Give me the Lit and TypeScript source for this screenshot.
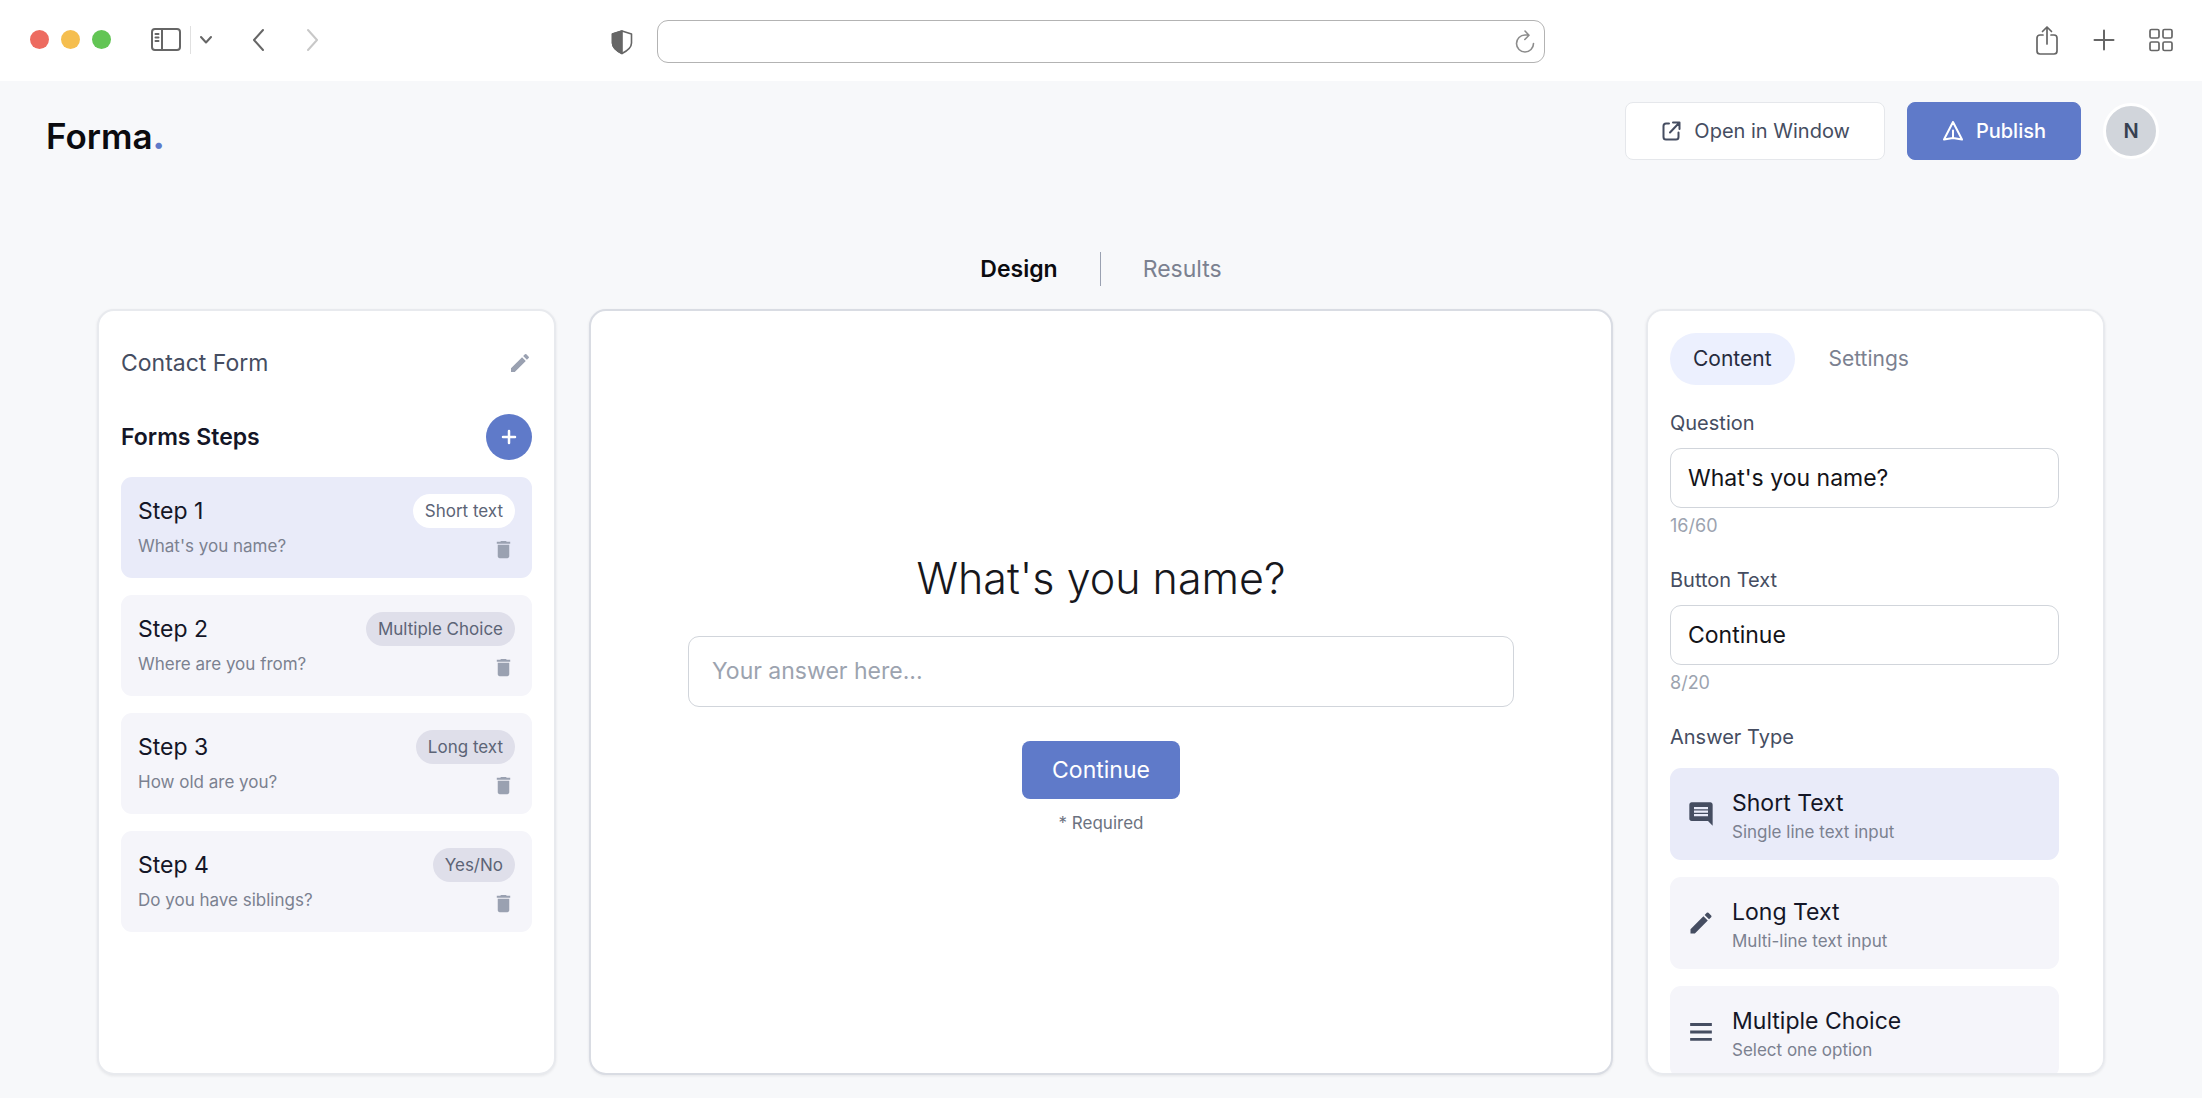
import { LitElement, html, css, svg, TemplateResult } from "lit";
import { customElement, property, state } from "lit/decorators.js";
import { classMap } from "lit/directives/class-map.js";

const controls = css`
  *,
  *::before,
  *::after {
    box-sizing: border-box;
  }
  button,
  input {
    font: inherit;
    color: inherit;
    margin: 0;
  }
  button {
    display: inline-flex;
    align-items: center;
    justify-content: center;
    padding: 0;
    border: 0;
    background: none;
    cursor: pointer;
  }
  svg {
    display: block;
    flex: none;
  }
  h1,
  h2,
  h3,
  p,
  ul {
    margin: 0;
    padding: 0;
    font-size: inherit;
    font-weight: inherit;
  }
  ul {
    list-style: none;
  }
`;

const stroked = (width: number, height: number, body: TemplateResult, weight = 2) => html`<svg
  width=${width}
  height=${height}
  viewBox="0 0 ${width} ${height}"
  fill="none"
  stroke="currentColor"
  stroke-width=${weight}
  stroke-linecap="round"
  stroke-linejoin="round"
  aria-hidden="true"
>
  ${body}
</svg>`;

const filled = (size: number, path: string) => html`<svg
  width=${size}
  height=${size}
  viewBox="0 0 24 24"
  fill="currentColor"
  aria-hidden="true"
>
  <path d=${path}></path>
</svg>`;

const PENCIL =
  "M3 17.25V21h3.75L17.81 9.94l-3.75-3.75L3 17.25zM20.71 7.04a1 1 0 0 0 0-1.41l-2.34-2.34a1 1 0 0 0-1.41 0l-1.83 1.83 3.75 3.75 1.83-1.83z";
const TRASH = "M6 19c0 1.100.9 2 2 2h8c1.100 0 2-.9 2-2V7H6v12zM19 4h-3.500l-1-1h-5l-1 1H5v2h14V4z";
const MESSAGE =
  "M21.990 4c0-1.100-.89-2-1.990-2H4c-1.100 0-2 .9-2 2v12c0 1.100.9 2 2 2h14l4 4-.01-18zM18 14H6v-2h12v2zm0-3H6V9h12v2zm0-3H6V6h12v2z";
const LINES = "M2.700 19.600h18.600v-2.500H2.700v2.500zm0-6.400h18.600v-2.500H2.700v2.500zM2.700 4.300v2.500h18.600V4.300H2.700z";

@customElement("browser-bar")
class BrowserBar extends LitElement {
  static styles = [
    controls,
    css`
      :host {
        display: grid;
        grid-template-columns: 1fr minmax(0, 888px) 1fr;
        align-items: center;
        height: 81px;
        background: #ffffff;
        color: #666666;
      }
      .left,
      .right,
      .lights,
      .sidebar,
      .history {
        display: flex;
        align-items: center;
      }
      .left {
        padding: 0 24px 2px 30px;
        gap: 40px;
      }
      .lights {
        gap: 12px;
      }
      .light {
        width: 19px;
        height: 19px;
        border-radius: 50%;
      }
      .close {
        background: #ed6b60;
      }
      .minimise {
        background: #f5be4f;
      }
      .maximise {
        background: #62c554;
      }
      .sidebar {
        gap: 9px;
      }
      .rule {
        width: 1px;
        height: 28px;
        background: #e0e0e0;
      }
      .history {
        gap: 43px;
      }
      .forward {
        color: #c8c8c8;
      }
      .shield {
        margin-left: auto;
        padding-top: 4px;
      }
      .address {
        display: flex;
        align-items: center;
        height: 43px;
        margin-top: 2px;
        padding-right: 9px;
        border: 1px solid #b3b3b3;
        border-radius: 11px;
      }
      .address input {
        flex: 1;
        min-width: 0;
        height: 100%;
        padding: 0 16px;
        border: 0;
        outline: 0;
        background: none;
        font-size: 17px;
      }
      .reload {
        color: #8c8c8c;
      }
      .right {
        justify-content: flex-end;
        gap: 33px;
        padding: 0 29px 2px 0;
      }
    `,
  ];

  render() {
    return html`
      <div class="left">
        <div class="lights">
          <button class="light close" aria-label="Close"></button>
          <button class="light minimise" aria-label="Minimise"></button>
          <button class="light maximise" aria-label="Maximise"></button>
        </div>
        <div class="sidebar">
          <button aria-label="Toggle sidebar">
            ${stroked(
              30,
              24,
              svg`<rect x="1" y="1" width="28" height="21" rx="3"></rect><path d="M11 1v21M4.500 6h3M4.500 9.500h3M4.500 13h3"></path>`,
            )}
          </button>
          <span class="rule"></span>
          <button aria-label="Tab groups">${stroked(12, 10, svg`<path d="M1 2l5 5.500L11 2"></path>`)}</button>
        </div>
        <div class="history">
          <button aria-label="Back">${stroked(12, 24, svg`<path d="M11 2L2 12l9 10"></path>`)}</button>
          <button class="forward" aria-label="Forward">${stroked(12, 24, svg`<path d="M1 2l9 10-9 10"></path>`)}</button>
        </div>
        <button class="shield" aria-label="Privacy report">
          ${stroked(
            22,
            26,
            svg`<path d="M11 2L20.500 5v9c0 5-4.500 8-9.500 10.500C6 22 1.500 19 1.500 14V5z" stroke-width="1.600"></path><path d="M11 2v22.500C6 22 1.500 19 1.500 14V5z" fill="currentColor" stroke-width="1.600"></path>`,
          )}
        </button>
      </div>
      <div class="address">
        <input type="text" aria-label="Address" />
        <button class="reload" aria-label="Reload">
          ${stroked(20, 24, svg`<path d="M18.500 13.500a8.500 8.500 0 1 1-8.500-8.500h3M10 1l4 4.200L9.800 9.500"></path>`, 1.6)}
        </button>
      </div>
      <div class="right">
        <button aria-label="Share">
          ${stroked(
            24,
            30,
            svg`<path d="M8 10H5a3 3 0 0 0-3 3v13a3 3 0 0 0 3 3h14a3 3 0 0 0 3-3V13a3 3 0 0 0-3-3h-3M12 19V2M7.500 6.500L12 2l4.500 4.500"></path>`,
            1.7,
          )}
        </button>
        <button aria-label="New tab">${stroked(24, 24, svg`<path d="M12 2.500v19M2.500 12h19"></path>`)}</button>
        <button aria-label="Tab overview">
          ${stroked(
            24,
            24,
            svg`<rect x="1" y="1.500" width="9" height="8.500" rx="1.500"></rect><rect x="14" y="1.500" width="9" height="8.500" rx="1.500"></rect><rect x="1" y="14" width="9" height="8.500" rx="1.500"></rect><rect x="14" y="14" width="9" height="8.500" rx="1.500"></rect>`,
            1.7,
          )}
        </button>
      </div>
    `;
  }
}

@customElement("app-header")
class AppHeader extends LitElement {
  static styles = [
    controls,
    css`
      :host {
        display: flex;
        justify-content: space-between;
        padding: 21px 43px 0 46px;
      }
      .logo {
        align-self: flex-end;
        font-size: 35px;
        line-height: 48px;
        font-weight: 600;
        color: #0b0b0f;
      }
      .dot {
        color: #5f7ac9;
        font-weight: 800;
      }
      .actions {
        display: flex;
        align-items: center;
        gap: 22px;
      }
      .action {
        height: 58px;
        padding: 0 34px;
        gap: 12px;
        border: 1px solid #e5e7eb;
        border-radius: 8px;
        background: #ffffff;
        color: #454d61;
        font-size: 20px;
      }
      .publish {
        border-color: #5f7ac9;
        background: #5f7ac9;
        color: #ffffff;
        font-weight: 500;
      }
      .avatar {
        width: 56px;
        height: 56px;
        border: 3px solid #ffffff;
        border-radius: 50%;
        background: #d1d5db;
        color: #374151;
        font-size: 20px;
        font-weight: 600;
      }
    `,
  ];

  render() {
    return html`
      <h1 class="logo">Forma<span class="dot">.</span></h1>
      <div class="actions">
        <button class="action">
          ${stroked(
            22,
            22,
            svg`<path d="M9 3.500H6A2.500 2.500 0 0 0 3.500 6v11A2.500 2.500 0 0 0 6 19.500h10a2.500 2.500 0 0 0 2.500-2.500v-4.500M13 2.500h6.500V9M19 3l-9 9.500"></path>`,
          )}
          Open in Window
        </button>
        <button class="action publish">
          ${stroked(22, 22, svg`<path d="M11 2L2 19.500l9-1.500 9 1.500zM11 18V10.500"></path>`)}
          Publish
        </button>
        <button class="avatar" aria-label="Account">N</button>
      </div>
    `;
  }
}

interface Step {
  question: string;
  kind: string;
}

@customElement("steps-panel")
class StepsPanel extends LitElement {
  @state() private selected = 0;

  private steps: Step[] = [
    { question: "What's you name?", kind: "Short text" },
    { question: "Where are you from?", kind: "Multiple Choice" },
    { question: "How old are you?", kind: "Long text" },
    { question: "Do you have siblings?", kind: "Yes/No" },
  ];

  static styles = [
    controls,
    css`
      :host {
        display: block;
        padding: 24px 22px;
        overflow: hidden;
      }
      .head {
        display: flex;
        align-items: center;
        justify-content: space-between;
      }
      .form-name {
        height: 56px;
        margin-bottom: 23px;
        color: #454d61;
      }
      .icon {
        color: #9aa1b1;
      }
      .heading {
        font-weight: 600;
        color: #141627;
      }
      .add {
        width: 46px;
        height: 46px;
        border-radius: 50%;
        background: #5f7ac9;
        color: #ffffff;
      }
      .steps {
        display: grid;
        gap: 17px;
        margin-top: 17px;
      }
      .step {
        display: grid;
        gap: 6px;
        padding: 17px;
        border-radius: 11px;
        background: #f5f5fa;
      }
      .selected {
        background: #e9ebf9;
      }
      .line {
        display: flex;
        align-items: center;
        justify-content: space-between;
      }
      .detail {
        height: 27px;
        align-items: flex-start;
      }
      .detail .icon {
        align-self: flex-end;
      }
      .title {
        color: #141627;
      }
      .tag {
        padding: 0 12px;
        border-radius: 17px;
        background: #dfdfea;
        color: #5c6476;
        font-size: 17px;
        line-height: 34px;
      }
      .selected .tag {
        background: #ffffff;
      }
      .question {
        color: #7b8190;
        font-size: 17px;
        line-height: 24px;
      }
    `,
  ];

  render() {
    return html`
      <div class="head form-name">
        <h2>Contact Form</h2>
        <button class="icon" aria-label="Rename form">${filled(24, PENCIL)}</button>
      </div>
      <div class="head">
        <h2 class="heading">Forms Steps</h2>
        <button class="add" aria-label="Add step">${stroked(16, 16, svg`<path d="M8 2v12M2 8h12"></path>`, 2.5)}</button>
      </div>
      <ul class="steps">
        ${this.steps.map(
          (step, index) => html`
            <li
              class=${classMap({ step: true, selected: index === this.selected })}
              @click=${() => (this.selected = index)}
            >
              <div class="line">
                <h3 class="title">Step ${index + 1}</h3>
                <span class="tag">${step.kind}</span>
              </div>
              <div class="line detail">
                <p class="question">${step.question}</p>
                <button class="icon" aria-label="Delete step ${index + 1}">${filled(23, TRASH)}</button>
              </div>
            </li>
          `,
        )}
      </ul>
    `;
  }
}

@customElement("form-preview")
class FormPreview extends LitElement {
  @property() question = "";
  @property() action = "";

  static styles = [
    controls,
    css`
      :host {
        display: flex;
        flex-direction: column;
        align-items: center;
        justify-content: center;
        padding: 0 95px;
      }
      .question {
        margin-bottom: 28px;
        color: #17171c;
        font-size: 43px;
        line-height: 60px;
        font-weight: 300;
      }
      .answer {
        width: 100%;
        max-width: 826px;
        height: 71px;
        padding: 0 23px;
        border: 1px solid #d1d5db;
        border-radius: 11px;
        background: #ffffff;
      }
      .answer::placeholder {
        color: #9ca3af;
      }
      .submit {
        height: 58px;
        margin: 34px 0 10px;
        padding: 0 30px;
        border-radius: 8px;
        background: #5f7ac9;
        color: #ffffff;
      }
      .required {
        color: #6b7280;
        font-size: 17px;
        line-height: 28px;
      }
    `,
  ];

  render() {
    return html`
      <label class="question" for="answer">${this.question}</label>
      <input class="answer" id="answer" type="text" placeholder="Your answer here..." />
      <button class="submit">${this.action}</button>
      <p class="required">* Required</p>
    `;
  }
}

@customElement("settings-panel")
class SettingsPanel extends LitElement {
  @property() question = "";
  @property() action = "";
  @state() private selected = 0;

  private types = [
    { name: "Short Text", hint: "Single line text input", icon: MESSAGE },
    { name: "Long Text", hint: "Multi-line text input", icon: PENCIL },
    { name: "Multiple Choice", hint: "Select one option", icon: LINES },
  ];

  static styles = [
    controls,
    css`
      :host {
        display: block;
        padding: 22px 44px 22px 22px;
        overflow: auto;
        scrollbar-width: none;
      }
      .tabs {
        display: flex;
        gap: 11px;
        margin-bottom: 24px;
      }
      .tab {
        height: 52px;
        padding: 0 23px;
        border-radius: 26px;
        color: #7b8190;
        font-size: 21px;
      }
      .current {
        background: #ecf0fe;
        color: #262b3d;
      }
      .label {
        display: block;
        color: #454d61;
        font-size: 20px;
        line-height: 28px;
      }
      .field {
        margin-bottom: 26px;
      }
      .input {
        width: 100%;
        height: 60px;
        margin: 11px 0 4px;
        padding: 0 17px;
        border: 1px solid #d1d5db;
        border-radius: 11px;
        background: #ffffff;
        color: #141419;
      }
      .count {
        color: #9ca3af;
        font-size: 18px;
        line-height: 28px;
      }
      .types {
        display: grid;
        gap: 17px;
        margin-top: 17px;
      }
      .type {
        justify-content: flex-start;
        width: 100%;
        height: 92px;
        gap: 17px;
        padding: 0 17px;
        border-radius: 11px;
        background: #f5f5fa;
        color: #454d61;
        text-align: left;
      }
      .selected {
        background: #e9ebf9;
      }
      .copy {
        display: grid;
        padding-top: 3px;
      }
      .name {
        color: #141627;
      }
      .hint {
        color: #7b8190;
        font-size: 17px;
        line-height: 26px;
      }
    `,
  ];

  render() {
    return html`
      <div class="tabs">
        <button class="tab current">Content</button>
        <button class="tab">Settings</button>
      </div>
      <div class="field">
        <label class="label" for="question">Question</label>
        <input class="input" id="question" type="text" maxlength="60" .value=${this.question} />
        <p class="count">${this.question.length}/60</p>
      </div>
      <div class="field">
        <label class="label" for="action">Button Text</label>
        <input class="input" id="action" type="text" maxlength="20" .value=${this.action} />
        <p class="count">${this.action.length}/20</p>
      </div>
      <h2 class="label">Answer Type</h2>
      <div class="types">
        ${this.types.map(
          (type, index) => html`
            <button
              class=${classMap({ type: true, selected: index === this.selected })}
              @click=${() => (this.selected = index)}
            >
              ${filled(28, type.icon)}
              <span class="copy">
                <span class="name">${type.name}</span>
                <span class="hint">${type.hint}</span>
              </span>
            </button>
          `,
        )}
      </div>
    `;
  }
}

@customElement("app-root")
class AppRoot extends LitElement {
  static styles = [
    controls,
    css`
      :host {
        display: flex;
        flex-direction: column;
        height: 100vh;
        background: #f7f8fa;
        font-family: Inter, "Liberation Sans", sans-serif;
        font-size: 23px;
        line-height: 32px;
      }
      .views {
        display: flex;
        justify-content: center;
        gap: 42px;
        margin: 92px 0 23px;
      }
      .view {
        color: #7b8190;
        line-height: 34px;
      }
      .current {
        color: #0b0b0f;
        font-weight: 600;
      }
      .rule {
        width: 1px;
        background: #9aa1b1;
      }
      .board {
        flex: 1;
        min-height: 0;
        display: grid;
        grid-template-columns: 459px minmax(0, 1fr) 459px;
        gap: 33px;
        padding: 0 97px 23px;
      }
      .panel {
        box-sizing: border-box;
        min-height: 0;
        border: 2px solid #e8eaee;
        border-radius: 17px;
        background: #ffffff;
        box-shadow: 0 1px 3px rgba(20, 22, 39, 0.08);
      }
      .main {
        border-color: #d9dce3;
      }
    `,
  ];

  private question = "What's you name?";
  private action = "Continue";

  render() {
    return html`
      <browser-bar></browser-bar>
      <app-header></app-header>
      <nav class="views">
        <button class="view current">Design</button>
        <span class="rule"></span>
        <button class="view">Results</button>
      </nav>
      <main class="board">
        <steps-panel class="panel"></steps-panel>
        <form-preview class="panel main" .question=${this.question} .action=${this.action}></form-preview>
        <settings-panel class="panel" .question=${this.question} .action=${this.action}></settings-panel>
      </main>
    `;
  }
}
